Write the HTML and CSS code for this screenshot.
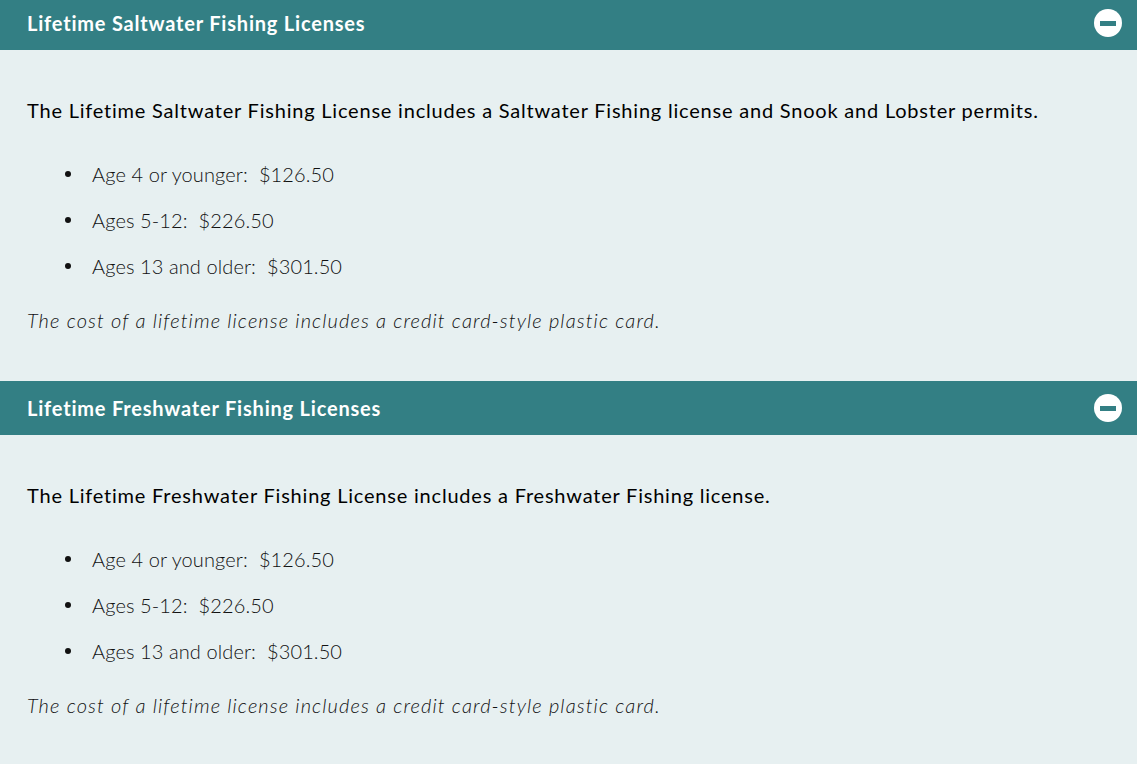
FILE: index.html
```html
<!DOCTYPE html>
<html>
<head>
<meta charset="utf-8">
<link rel="stylesheet" href="styles.css">
</head>
<body>
<div class="accordion">
  <section class="panel panel-first">
    <div class="panel-head">
      <h3 class="panel-title">Lifetime Saltwater Fishing Licenses</h3>
      <span class="toggle"><span class="toggle-bar"></span></span>
    </div>
    <div class="panel-body">
      <p class="lead">The Lifetime Saltwater Fishing License includes a Saltwater Fishing license and Snook and Lobster permits.</p>
      <ul class="prices">
        <li>Age 4 or younger:&nbsp; $126.50</li>
        <li>Ages 5-12:&nbsp; $226.50</li>
        <li>Ages 13 and older:&nbsp; $301.50</li>
      </ul>
      <p class="note">The cost of a lifetime license includes a credit card-style plastic card.</p>
    </div>
  </section>
  <section class="panel">
    <div class="panel-head">
      <h3 class="panel-title">Lifetime Freshwater Fishing Licenses</h3>
      <span class="toggle"><span class="toggle-bar"></span></span>
    </div>
    <div class="panel-body">
      <p class="lead">The Lifetime Freshwater Fishing License includes a Freshwater Fishing license.</p>
      <ul class="prices">
        <li>Age 4 or younger:&nbsp; $126.50</li>
        <li>Ages 5-12:&nbsp; $226.50</li>
        <li>Ages 13 and older:&nbsp; $301.50</li>
      </ul>
      <p class="note">The cost of a lifetime license includes a credit card-style plastic card.</p>
    </div>
  </section>
</div>
</body>
</html>
```

FILE: styles.css
```css
html, body {
  margin: 0;
  padding: 0;
  background: #ffffff;
}
body {
  font-family: Lato, "Open Sans", sans-serif;
  color: #111111;
  overflow: hidden;
}
.accordion {
  width: 1137px;
  background: #e7f0f1;
}
.panel-first {
  margin-top: -4px;
}
.panel-head {
  height: 54px;
  background: #337f84;
  display: flex;
  align-items: center;
  justify-content: space-between;
  padding: 0 15px 0 27px;
}
.panel-title {
  margin: 0;
  color: #ffffff;
  font-size: 20px;
  font-weight: 700;
  letter-spacing: 0.8px;
}
.toggle {
  width: 28px;
  height: 28px;
  border-radius: 50%;
  background: #ffffff;
  display: flex;
  align-items: center;
  justify-content: center;
}
.toggle-bar {
  width: 16px;
  height: 5px;
  background: #337f84;
}
.panel-body {
  padding: 48px 27px 49px;
}
.lead {
  margin: 0;
  font-size: 20px;
  line-height: 24px;
  font-weight: 400;
  letter-spacing: 0.79px;
  color: #000000;
}
.prices {
  list-style: none;
  margin: 40px 0 30px;
  padding: 0 0 0 38px;
  font-size: 20px;
  line-height: 24px;
  font-weight: 300;
  letter-spacing: 0.1px;
  color: #111111;
}
.prices li {
  display: flex;
  align-items: center;
  margin-bottom: 22px;
}
.prices li::before {
  content: "";
  width: 6px;
  height: 6px;
  border-radius: 50%;
  background: #111111;
  margin-right: 21px;
  flex: none;
}
.note {
  margin: 0;
  font-size: 20px;
  line-height: 24px;
  font-style: italic;
  font-weight: 300;
  letter-spacing: 1.1px;
  color: #111111;
}
```
